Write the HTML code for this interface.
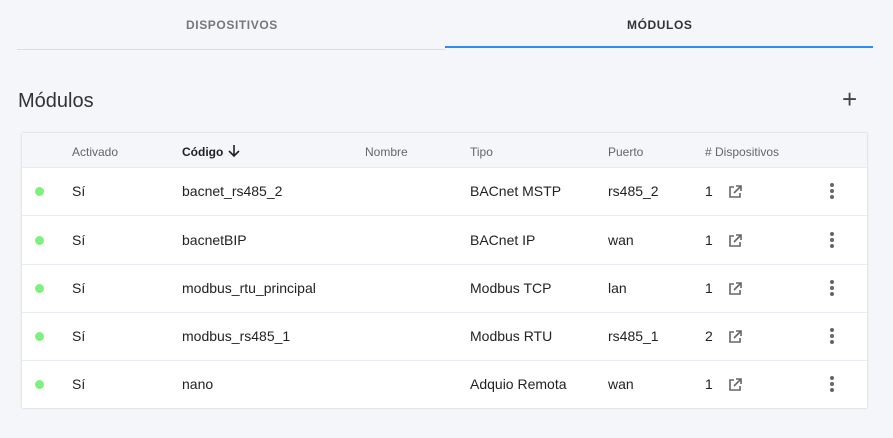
<!DOCTYPE html>
<html><head><meta charset="utf-8"><style>
body{margin:0;width:893px;height:438px;background:#f5f6fa;font-family:"Liberation Sans",sans-serif;position:relative;overflow:hidden}
.tab{position:absolute;top:18px;font-size:12px;letter-spacing:.6px;font-weight:bold}
.abs{position:absolute}
.card{position:absolute;left:22px;top:133px;width:845px;height:275px;background:#fff;box-shadow:0 0 2px rgba(0,0,0,.2)}
.hdr{position:absolute;left:0;top:0;width:845px;height:34px;background:#f5f6fa;border-bottom:1px solid #e8ebf2}
.row{position:absolute;left:0;width:845px;height:48px;border-bottom:1px solid #e8ebf2;font-size:14px;color:#222}
.row span,.hdr span{position:absolute}
.row span{top:16px}
.hdr span{top:12px;font-size:12px;color:#666}
.dot{width:9px;height:9px;border-radius:50%;background:#7df07d;left:13px;top:20px!important}
.kb{left:808px;top:16px!important;width:4px}
.kb i{display:block;width:4px;height:4px;border-radius:50%;background:#666;margin-bottom:2px}
.ic{left:705px;top:17px!important}
</style></head><body>
<div class="tab" style="left:186px;color:#777">DISPOSITIVOS</div>
<div class="tab" style="left:627px;color:#333">MÓDULOS</div>
<div class="abs" style="left:17px;top:49px;width:428px;height:1px;background:#dadde3"></div>
<div class="abs" style="left:445px;top:46px;width:428px;height:2px;background:#2d8cf0"></div>
<div class="abs" style="left:18px;top:90px;font-size:20px;color:#333">Módulos</div>
<div class="abs" style="left:842px;top:86px;font-size:26px;color:#444;line-height:26px">+</div>
<div class="card">
<div class="hdr"><span style="left:50px">Activado</span><span style="left:160px;color:#222;font-weight:bold">Código</span><svg style="position:absolute;left:205px;top:11px" width="14" height="14" viewBox="0 0 14 14" fill="none" stroke="#222" stroke-width="1.6"><path d="M7 1v11M2 7l5 5 5-5"/></svg><span style="left:343px">Nombre</span><span style="left:448px">Tipo</span><span style="left:586px">Puerto</span><span style="left:683px"># Dispositivos</span></div>
<div class="row" style="top:34px"><span class="dot"></span><span style="left:50px">Sí</span><span style="left:160px">bacnet_rs485_2</span><span style="left:448px">BACnet MSTP</span><span style="left:586px">rs485_2</span><span style="left:683px">1</span><span class="ic"><svg width="16" height="16" viewBox="0 0 16 16" fill="none" stroke="#666" stroke-width="1.6"><path d="M7 3H3v10h10V9M9 2h5v5M14 2L7 9"/></svg></span><span class="kb"><i></i><i></i><i></i></span></div>
<div class="row" style="top:83px"><span class="dot"></span><span style="left:50px">Sí</span><span style="left:160px">bacnetBIP</span><span style="left:448px">BACnet IP</span><span style="left:586px">wan</span><span style="left:683px">1</span><span class="ic"><svg width="16" height="16" viewBox="0 0 16 16" fill="none" stroke="#666" stroke-width="1.6"><path d="M7 3H3v10h10V9M9 2h5v5M14 2L7 9"/></svg></span><span class="kb"><i></i><i></i><i></i></span></div>
<div class="row" style="top:131px"><span class="dot"></span><span style="left:50px">Sí</span><span style="left:160px">modbus_rtu_principal</span><span style="left:448px">Modbus TCP</span><span style="left:586px">lan</span><span style="left:683px">1</span><span class="ic"><svg width="16" height="16" viewBox="0 0 16 16" fill="none" stroke="#666" stroke-width="1.6"><path d="M7 3H3v10h10V9M9 2h5v5M14 2L7 9"/></svg></span><span class="kb"><i></i><i></i><i></i></span></div>
<div class="row" style="top:179px"><span class="dot"></span><span style="left:50px">Sí</span><span style="left:160px">modbus_rs485_1</span><span style="left:448px">Modbus RTU</span><span style="left:586px">rs485_1</span><span style="left:683px">2</span><span class="ic"><svg width="16" height="16" viewBox="0 0 16 16" fill="none" stroke="#666" stroke-width="1.6"><path d="M7 3H3v10h10V9M9 2h5v5M14 2L7 9"/></svg></span><span class="kb"><i></i><i></i><i></i></span></div>
<div class="row" style="top:227px;border-bottom:none"><span class="dot"></span><span style="left:50px">Sí</span><span style="left:160px">nano</span><span style="left:448px">Adquio Remota</span><span style="left:586px">wan</span><span style="left:683px">1</span><span class="ic"><svg width="16" height="16" viewBox="0 0 16 16" fill="none" stroke="#666" stroke-width="1.6"><path d="M7 3H3v10h10V9M9 2h5v5M14 2L7 9"/></svg></span><span class="kb"><i></i><i></i><i></i></span></div>
</div>
</body></html>
